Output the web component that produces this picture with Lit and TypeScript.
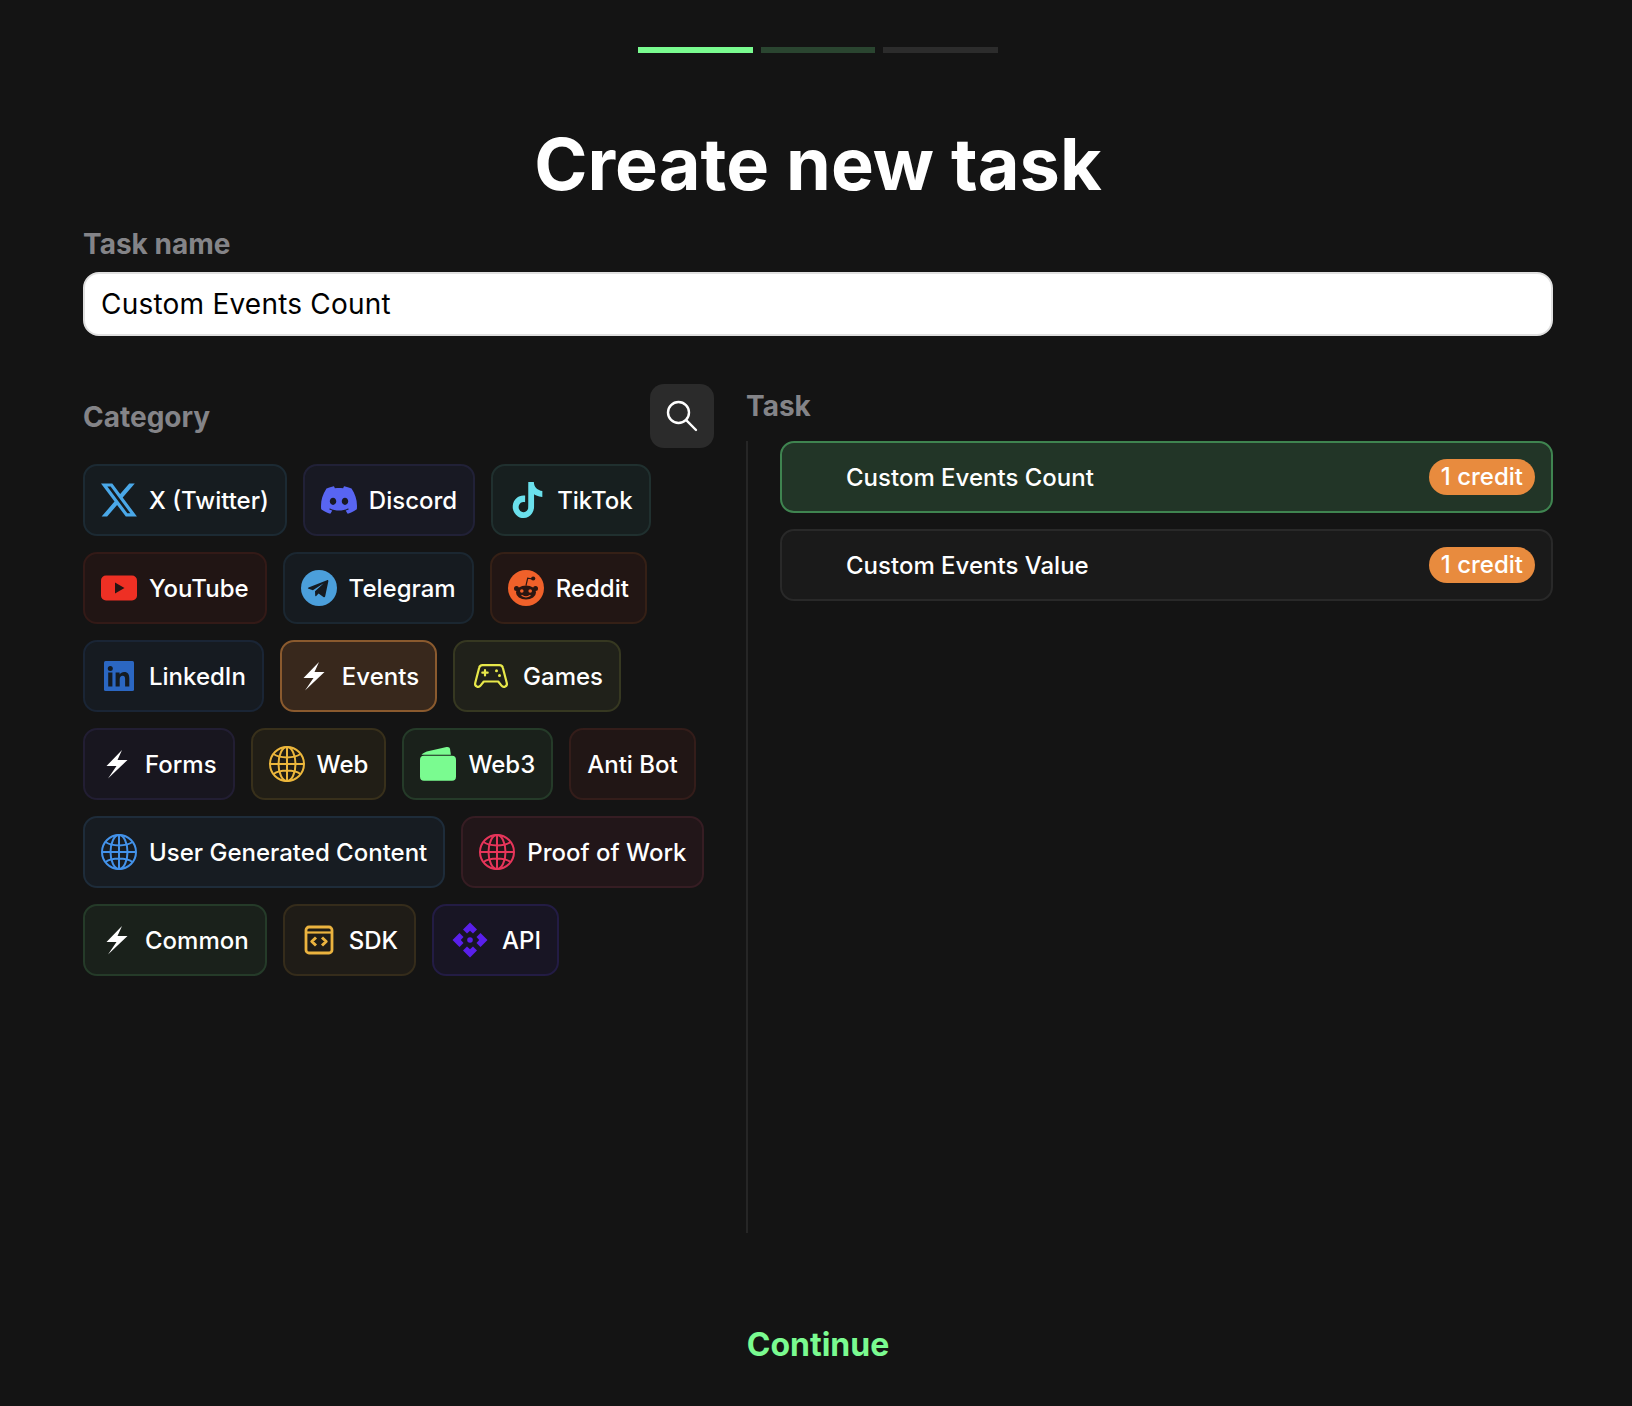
import { LitElement, html, css, svg } from "lit";
import { customElement } from "lit/decorators.js";

const dark = "#161b21";
const globe = (c: string) => svg`<g fill="none" stroke="${c}" stroke-width="2">
  <circle cx="18" cy="18" r="17"/><ellipse cx="18" cy="18" rx="8.5" ry="17"/>
  <path d="M18 1v34M1 18h34M4.5 8c3.5 2.4 8.2 3.4 13.5 3.4S28 10.400 31.500 8M4.500 28c3.500-2.400 8.200-3.400 13.500-3.400S28 25.600 31.500 28"/></g>`;
const bolt = svg`<path fill="#fff" d="M21 2 5.500 18H15.500L7 30.500 26.500 12H16.500Z"/>`;

const icons: Record<string, { w: number; h: number; body: unknown }> = {
  x: { w: 36, h: 36, body: svg`<path transform="translate(-2.200 -2.400) scale(1.670 1.700)" fill="#4aa8e8" d="M18.244 2.25h3.308l-7.227 8.26 8.502 11.24H16.17l-5.214-6.817L4.99 21.75H1.68l7.73-8.835L1.254 2.25H8.08l4.713 6.231zm-1.161 17.52h1.833L7.084 4.126H5.117z"/>` },
  discord: { w: 36, h: 36, body: svg`<path transform="scale(1.5)" fill="#5865f2" d="M20.317 4.3698a19.7913 19.7913 0 00-4.8851-1.5152.0741.0741 0 00-.0785.0371c-.211.3753-.4447.8648-.6083 1.2495-1.8447-.2762-3.68-.2762-5.4868 0-.1636-.3933-.4058-.8742-.6177-1.2495a.077.077 0 00-.0785-.037 19.7363 19.7363 0 00-4.8852 1.515.0699.0699 0 00-.0321.0277C.5334 9.0458-.319 13.5799.0992 18.0578a.0824.0824 0 00.0312.0561c2.0528 1.5076 4.0413 2.4228 5.9929 3.0294a.0777.0777 0 00.0842-.0276c.4616-.6304.8731-1.2952 1.226-1.9942a.076.076 0 00-.0416-.1057c-.6528-.2476-1.2743-.5495-1.8722-.8923a.077.077 0 01-.0076-.1277c.1258-.0943.2517-.1923.3718-.2914a.0743.0743 0 01.0776-.0105c3.9278 1.7933 8.18 1.7933 12.0614 0a.0739.0739 0 01.0785.0095c.1202.099.246.1981.3728.2924a.077.077 0 01-.0066.1276 12.2986 12.2986 0 01-1.873.8914.0766.0766 0 00-.0407.1067c.3604.698.7719 1.3628 1.225 1.9932a.076.076 0 00.0842.0286c1.961-.6067 3.9495-1.5219 6.0023-3.0294a.077.077 0 00.0313-.0552c.5004-5.177-.8382-9.6739-3.5485-13.6604a.061.061 0 00-.0312-.0286zM8.02 15.3312c-1.1825 0-2.1569-1.0857-2.1569-2.419 0-1.3332.9555-2.4189 2.157-2.4189 1.2108 0 2.1757 1.0952 2.1568 2.419 0 1.3332-.9555 2.4189-2.1569 2.4189zm7.9748 0c-1.1825 0-2.1569-1.0857-2.1569-2.419 0-1.3332.9554-2.4189 2.1569-2.4189 1.2108 0 2.1757 1.0952 2.1568 2.419 0 1.3332-.946 2.4189-2.1568 2.4189Z"/>` },
  tiktok: { w: 36, h: 36, body: svg`<path transform="translate(1.500 0) scale(1.420 1.500)" fill="#6ae0ec" d="M12.525.02c1.31-.02 2.61-.01 3.91-.02.08 1.53.63 3.09 1.75 4.17 1.12 1.11 2.7 1.62 4.24 1.79v4.03c-1.44-.05-2.89-.35-4.2-.97-.57-.26-1.1-.59-1.62-.93-.01 2.92.01 5.84-.02 8.75-.08 1.4-.54 2.79-1.35 3.94-1.31 1.92-3.58 3.17-5.91 3.21-1.43.08-2.86-.31-4.08-1.03-2.02-1.19-3.44-3.37-3.65-5.71-.02-.5-.03-1-.01-1.49.18-1.9 1.12-3.72 2.58-4.96 1.66-1.44 3.98-2.13 6.15-1.72.02 1.48-.04 2.96-.04 4.44-.99-.32-2.15-.23-3.02.37-.63.41-1.11 1.04-1.36 1.75-.21.51-.15 1.07-.14 1.61.24 1.64 1.82 3.02 3.5 2.87 1.12-.01 2.19-.66 2.77-1.61.19-.33.4-.67.41-1.06.1-1.79.06-3.57.07-5.36.01-4.03-.01-8.05.02-12.07z"/>` },
  youtube: { w: 36, h: 36, body: svg`<rect x="0" y="5.500" width="36" height="25" rx="5" fill="#ee3024"/><path d="M14 12.500v11l9.500-5.500z" fill="#241413"/>` },
  telegram: { w: 36, h: 36, body: svg`<circle cx="18" cy="18" r="18" fill="#4b9fdb"/><path d="M7.500 17.500 26 10.200c.9-.3 1.600.2 1.300 1.400l-3.100 14.700c-.2 1-.9 1.300-1.800.8l-4.800-3.500-2.400 2.300c-.5.500-1 .2-1-.4l-.2-4.300 8.700-7.900-10.800 6.900-4.300-1.400c-1-.3-1-1 .2-1.300Z" fill="${dark}"/>` },
  reddit: { w: 36, h: 36, body: svg`<circle cx="18" cy="18" r="18" fill="#f0612a"/>
    <g fill="#2a1611"><ellipse cx="18" cy="22.500" rx="10" ry="7"/><circle cx="8.500" cy="18.500" r="2.500"/><circle cx="27.500" cy="18.500" r="2.500"/><circle cx="25.200" cy="8.500" r="2.100"/></g>
    <path d="M18 15.500l1.700-7.300 5 .8" fill="none" stroke="#2a1611" stroke-width="1.200"/>
    <g fill="#f0612a"><circle cx="13.800" cy="21" r="1.800"/><circle cx="22.200" cy="21" r="1.800"/></g>
    <path d="M14 25.500c2.500 1.700 5.500 1.700 8 0" fill="none" stroke="#f0612a" stroke-width="1.300" stroke-linecap="round"/>` },
  linkedin: { w: 36, h: 36, body: svg`<rect x="3" y="3" width="30" height="30" rx="1.500" fill="#2b67c2"/>
    <g fill="#141b22"><circle cx="9.300" cy="10.500" r="2.500"/><rect x="7.200" y="14.500" width="4.200" height="14"/><path d="M14.600 14.500h4v2c.9-1.500 2.500-2.400 4.500-2.400 4 0 5.200 2.500 5.200 6.300v8.100h-4.200v-7.300c0-1.900-.5-3.400-2.400-3.400-2 0-3 1.400-3 3.400v7.300h-4.100Z"/></g>` },
  bolt: { w: 32, h: 32, body: bolt },
  games: { w: 40, h: 36, body: svg`<g transform="translate(2 0)"><g fill="none" stroke="#e7e84a" stroke-width="2.200" stroke-linejoin="round" stroke-linecap="round"><path d="M9.500 7.200h17a3.500 3.500 0 0 1 3.400 2.800L33.800 25a3 3 0 0 1-5.300 2.600L25.200 23.500H10.800L7.500 27.600A3 3 0 0 1 2.200 25L6.100 10a3.500 3.500 0 0 1 3.400-2.800Z"/><path d="M12 12v5.400M9.300 14.700h5.400"/></g><circle cx="23.500" cy="12.800" r="1.500" fill="#e7e84a"/><circle cx="26.500" cy="17.500" r="1.500" fill="#e7e84a"/></g>` },
  webg: { w: 36, h: 36, body: globe("#ecb73c") },
  ugcg: { w: 36, h: 36, body: globe("#4392ea") },
  powg: { w: 36, h: 36, body: globe("#e7355a") },
  wallet: { w: 36, h: 36, body: svg`<rect x="0" y="9.700" width="36" height="25" rx="4" fill="#7afb90"/><path d="M1.500 8.700C3 6.800 6 5.600 9 4.900L26.500 1.100c2-.4 3.300.4 3.600 2.300l.8 5.300Z" fill="#7afb90"/>` },
  sdk: { w: 36, h: 36, body: svg`<g fill="none" stroke="#ebb33f" stroke-width="2.800" stroke-linejoin="round"><rect x="5" y="5" width="26" height="26" rx="3"/><path d="M5 10.500h26" stroke-width="2.200"/><path d="M15 15.500l-4.200 4 4.200 4M21 15.500l4.200 4-4.200 4" stroke-width="3"/></g>` },
  api: { w: 40, h: 40, body: svg`<g fill="#5a1fec"><path d="M20 2.500 27 9.500 23 13.500 20 10.800 17 13.500 13 9.500Z"/><path d="M20 37.500 27 30.500 23 26.500 20 29.200 17 26.500 13 30.500Z"/><path d="M2.500 20 9.500 13 13.500 17 10.800 20 13.500 23 9.500 27Z"/><path d="M37.500 20 30.500 13 26.500 17 29.200 20 26.500 23 30.500 27Z"/><circle cx="20" cy="20" r="2.800"/></g>` },
};

type Chip = { label: string; icon?: string; bg: string; bd: string };
const chips: Chip[] = [
  { label: "X (Twitter)", icon: "x", bg: "#161c20", bd: "#1c2a33" },
  { label: "Discord", icon: "discord", bg: "#181923", bd: "#212137" },
  { label: "TikTok", icon: "tiktok", bg: "#171f1f", bd: "#20302f" },
  { label: "YouTube", icon: "youtube", bg: "#211514", bd: "#331a17" },
  { label: "Telegram", icon: "telegram", bg: "#161b20", bd: "#1b2731" },
  { label: "Reddit", icon: "reddit", bg: "#221614", bd: "#352016" },
  { label: "LinkedIn", icon: "linkedin", bg: "#161b21", bd: "#1a2535" },
  { label: "Events", icon: "bolt", bg: "#38281c", bd: "#8a5a2e" },
  { label: "Games", icon: "games", bg: "#20211a", bd: "#363821" },
  { label: "Forms", icon: "bolt", bg: "#18161f", bd: "#221e33" },
  { label: "Web", icon: "webg", bg: "#211e16", bd: "#38301b" },
  { label: "Web3", icon: "wallet", bg: "#1a211b", bd: "#253b29" },
  { label: "Anti Bot", bg: "#211615", bd: "#341d1a" },
  { label: "User Generated Content", icon: "ugcg", bg: "#171c22", bd: "#1e2c3a" },
  { label: "Proof of Work", icon: "powg", bg: "#221619", bd: "#361d23" },
  { label: "Common", icon: "bolt", bg: "#1a211b", bd: "#253b29" },
  { label: "SDK", icon: "sdk", bg: "#1f1c17", bd: "#352c1b" },
  { label: "API", icon: "api", bg: "#181524", bd: "#231c44" },
];

@customElement("app-root")
export class AppRoot extends LitElement {
  static styles = css`
    :host {
      display: block;
      min-height: 1406px;
      background: #141414;
      color: #fff;
      font-family: Inter, "Liberation Sans", sans-serif;
      box-sizing: border-box;
      padding: 47px 79px 0 83px;
    }
    .steps { display: flex; justify-content: center; gap: 8px; }
    .steps i { width: 114.67px; height: 6px; background: #2c2c2c; display: block; }
    .steps i.on { background: #7afb90; }
    .steps i.next { background: #2a4530; }
    h1 {
      margin: 67px 0 0;
      font-size: 72px;
      line-height: 88px;
      font-weight: 700;
      text-align: center;
    }
    .label { font-size: 28px; line-height: 40px; font-weight: 700; color: #848488; }
    .name-label { margin-top: 16px; }
    .input {
      margin-top: 8px;
      height: 64px;
      box-sizing: border-box;
      background: #fff;
      border: 2px solid #e0e0e0;
      border-radius: 16px;
      color: #000;
      font-size: 28px;
      letter-spacing: 0.22px;
      line-height: 60px;
      padding: 0 16px;
    }
    .cols { display: grid; grid-template-columns: 631px 1fr; gap: 32px; margin-top: 48px; }
    .cat-head { display: flex; justify-content: space-between; align-items: center; height: 64px; }
    .cat-head .label { padding-top: 2px; }
    .task-label { padding-top: 2px; }
    .search {
      width: 64px; height: 64px; border-radius: 14px; background: #2b2b2b;
      display: flex; align-items: center; justify-content: center;
    }
    .chips { display: flex; flex-wrap: wrap; gap: 16px; margin-top: 16px; }
    .chip {
      display: flex; align-items: center; gap: 12px;
      height: 72px; box-sizing: border-box;
      padding: 0 16px; border: 2px solid; border-radius: 14px;
      font-size: 24px; font-weight: 500; white-space: nowrap;
    }
    .chip svg { display: block; flex: none; }
    .tasks {
      margin-top: 15px;
      height: 792px; box-sizing: border-box;
      border-left: 2px solid #262626;
      padding-left: 32px;
      display: flex; flex-direction: column; gap: 16px;
    }
    .task {
      height: 72px; box-sizing: border-box;
      display: flex; align-items: center; justify-content: space-between;
      padding: 0 16px 0 64px;
      background: #1a1a1a; border: 2px solid #292929; border-radius: 14px;
      font-size: 24px; font-weight: 500;
    }
    .task.sel { background: #223527; border-color: #3f8450; }
    .badge {
      height: 36px; line-height: 36px; padding: 0 12px; border-radius: 18px;
      background: #e88b3e; font-size: 24px; font-weight: 500;
    }
    .continue {
      margin-top: 90px; text-align: center;
      font-size: 32px; line-height: 44px; font-weight: 700; color: #7afb90;
    }
  `;

  render() {
    return html`
      <div class="steps"><i class="on"></i><i class="next"></i><i></i></div>
      <h1>Create new task</h1>
      <div class="label name-label">Task name</div>
      <div class="input">Custom Events Count</div>
      <div class="cols">
        <section>
          <div class="cat-head">
            <div class="label">Category</div>
            <div class="search">
              <svg width="32" height="32" viewBox="0 0 32 32" fill="none" stroke="#fff" stroke-width="2.400" stroke-linecap="round">
                <circle cx="12.500" cy="12.500" r="10.500"/><path d="M20.200 20.200 30 30"/>
              </svg>
            </div>
          </div>
          <div class="chips">
            ${chips.map((c) => html`
              <div class="chip" style="background:${c.bg};border-color:${c.bd}">
                ${c.icon ? html`<svg width=${icons[c.icon].w} height=${icons[c.icon].h} viewBox="0 0 ${icons[c.icon].w} ${icons[c.icon].h}">${icons[c.icon].body}</svg>` : ""}
                <span>${c.label}</span>
              </div>`)}
          </div>
        </section>
        <section>
          <div class="label task-label">Task</div>
          <div class="tasks">
            <div class="task sel"><span>Custom Events Count</span><span class="badge">1 credit</span></div>
            <div class="task"><span>Custom Events Value</span><span class="badge">1 credit</span></div>
          </div>
        </section>
      </div>
      <div class="continue">Continue</div>
    `;
  }
}
